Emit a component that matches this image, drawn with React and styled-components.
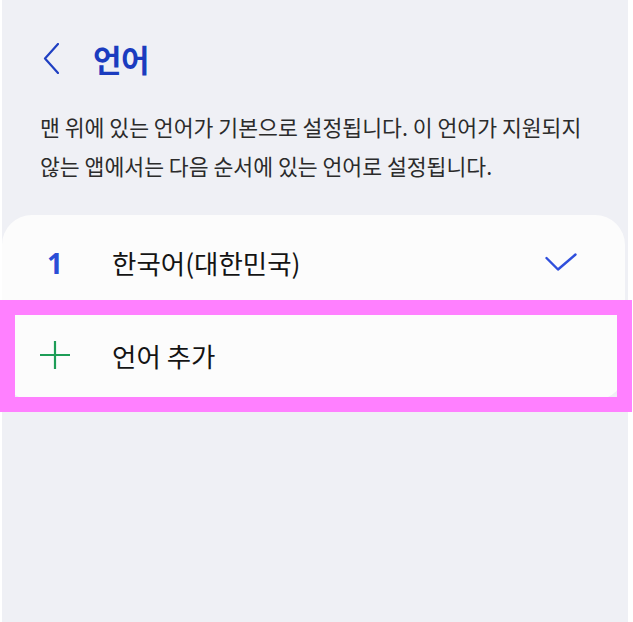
import React from "react";
import styled, { createGlobalStyle } from "styled-components";

const Global = createGlobalStyle`
  html, body { margin: 0; padding: 0; background: #ffffff; }
  body { font-family: "Noto Sans CJK KR", "Noto Sans", sans-serif; }
`;

const Page = styled.div`
  position: relative;
  width: 633px;
  height: 622px;
  overflow: hidden;
`;

const Screen = styled.div`
  margin-left: 2px;
  width: 626px;
  height: 622px;
  background: #eff0f5;
  display: flex;
  flex-direction: column;
`;

const Header = styled.header`
  display: flex;
  align-items: center;
  height: 56px;
  margin-top: 30px;
  padding-left: 41px;
  gap: 34px;
`;

const BackButton = styled.button`
  border: 0;
  padding: 0;
  background: none;
  display: flex;
  align-items: center;
  color: #1f3fc2;
`;

const Title = styled.h1`
  margin: 0;
  font-size: 31px;
  font-weight: 700;
  color: #1b3cbf;
  letter-spacing: -0.5px;
`;

const Description = styled.p`
  margin: 21px 0 0;
  padding: 0 20px 0 38px;
  font-size: 21.6px;
  line-height: 39px;
  color: #2b2b2b;
  white-space: nowrap;
`;

const Card = styled.section`
  margin-top: 30px;
  width: 623px;
  background: #fcfcfc;
  border-radius: 30px;
  overflow: hidden;
`;

const Row = styled.div`
  display: grid;
  grid-template-columns: 30px 1fr auto;
  column-gap: 42px;
  align-items: center;
  height: ${(p) => p.$h}px;
  padding: 0 48px 0 38px;
`;

const Lead = styled.div`
  display: flex;
  justify-content: center;
  align-items: center;
`;

const Order = styled.span`
  font-family: "Noto Sans", "Noto Sans CJK KR", sans-serif;
  font-size: 28px;
  font-weight: 700;
  color: #2a4ed6;
`;

const Label = styled.span`
  font-size: 26.5px;
  color: #141414;
`;

const Highlight = styled.div`
  position: absolute;
  left: 0;
  top: 300px;
  width: 632px;
  height: 112px;
  box-sizing: border-box;
  border: 15px solid #ff80ff;
  pointer-events: none;
`;

export default function App() {
  return (
    <Page>
      <Global />
      <Screen>
        <Header>
          <BackButton aria-label="back">
            <svg width="16" height="31" viewBox="0 0 16 31">
              <path d="M15 1 L2 15.5 L15 30" fill="none" stroke="currentColor" strokeWidth="2.2" strokeLinecap="round" strokeLinejoin="round" />
            </svg>
          </BackButton>
          <Title>언어</Title>
        </Header>
        <Description>
          맨 위에 있는 언어가 기본으로 설정됩니다. 이 언어가 지원되지
          <br />
          않는 앱에서는 다음 순서에 있는 언어로 설정됩니다.
        </Description>
        <Card>
          <Row $h={95}>
            <Lead>
              <Order>1</Order>
            </Lead>
            <Label>한국어(대한민국)</Label>
            <svg width="32" height="19" viewBox="0 0 32 19">
              <path d="M1.5 5 L13 16.5 L30.5 1.5" fill="none" stroke="#2f4fdc" strokeWidth="2.4" strokeLinecap="round" strokeLinejoin="round" />
            </svg>
          </Row>
          <Row $h={90}>
            <Lead>
              <svg width="30" height="30" viewBox="0 0 30 30">
                <path d="M0 15 H30 M15 1 V29" fill="none" stroke="#1d9d57" strokeWidth="2.2" />
              </svg>
            </Lead>
            <Label>언어 추가</Label>
            <span />
          </Row>
        </Card>
      </Screen>
      <Highlight />
    </Page>
  );
}
